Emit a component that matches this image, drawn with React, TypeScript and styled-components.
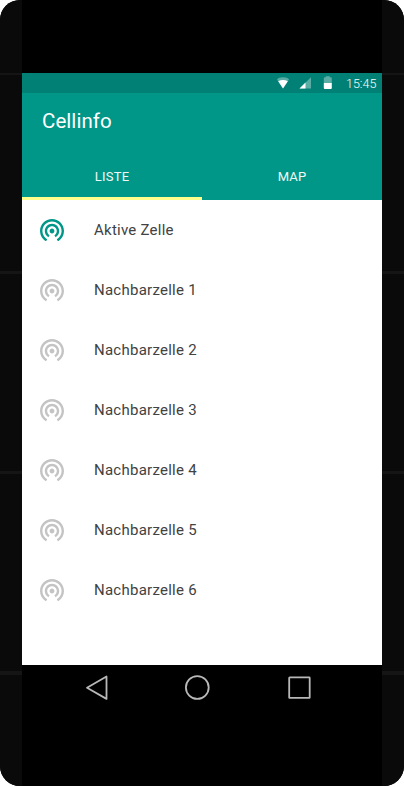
import React from "react";
import styled, { createGlobalStyle } from "styled-components";

const GlobalStyle = createGlobalStyle`
  * { box-sizing: border-box; }
  body { margin: 0; background: #fff; font-family: Roboto, sans-serif; }
`;

const Phone = styled.div`
  display: flex;
  width: 404px;
  height: 786px;
  border-radius: 20px;
  overflow: hidden;
  background: #000;
`;

const Rail = styled.div`
  display: flex;
  flex-direction: column;
  width: 22px;
  background: #0a0a0a;
`;

const RailSegment = styled.div<{ $height: number; $seam: number }>`
  height: ${(p) => p.$height}px;
  border-bottom: ${(p) => p.$seam}px solid #151515;
`;

const Device = styled.div`
  display: flex;
  flex-direction: column;
  width: 360px;
  padding-top: 73px;
`;

const StatusBar = styled.div`
  display: flex;
  align-items: center;
  justify-content: flex-end;
  height: 20px;
  padding-right: 5px;
  background: #018175;
`;

const StatusIcons = styled.svg`
  width: 56px;
  height: 20px;
  margin-right: 13px;
`;

const Clock = styled.span`
  width: 31px;
  padding-top: 2px;
  font-size: 12.5px;
  font-weight: 300;
  line-height: 18px;
  color: #fff;
  white-space: nowrap;
`;

const AppBar = styled.header`
  display: flex;
  flex-direction: column;
  height: 107px;
  background: #009788;
  color: #fff;
`;

const Title = styled.h1`
  height: 60px;
  margin: 0;
  padding-left: 20px;
  font-size: 20.5px;
  font-weight: 400;
  line-height: 56px;
  letter-spacing: 0.05px;
`;

const Tabs = styled.nav`
  display: flex;
  height: 47px;
`;

const Tab = styled.div<{ $active?: boolean }>`
  flex: 1;
  height: 47px;
  border-bottom: 3px solid ${(p) => (p.$active ? "#ffff8d" : "transparent")};
  font-size: 13px;
  line-height: 48px;
  letter-spacing: ${(p) => (p.$active ? 0.25 : 0.05)}px;
  text-align: center;
  color: #f2faf9;
`;

const List = styled.main`
  height: 465px;
  background: #fff;
`;

const Row = styled.div<{ $active?: boolean }>`
  display: flex;
  align-items: center;
  height: 60px;
  padding: 0 18px;
  gap: 30px;
  color: ${(p) => (p.$active ? "#009788" : "#c4c4c4")};
`;

const CellIcon = styled.svg`
  width: 24px;
  height: 22.4px;
  margin-top: 0.4px;
  fill: currentColor;
`;

const Label = styled.span`
  font-size: 15px;
  line-height: 20px;
  letter-spacing: 0.25px;
  color: #424242;
`;

const NavBar = styled.div`
  display: flex;
  align-items: center;
  height: 45px;
  padding-left: 63px;
`;

const NavIcon = styled.svg<{ $gap: number }>`
  width: 26px;
  height: 26px;
  margin-right: ${(p) => p.$gap}px;
  fill: none;
  stroke: #b8b8b8;
  stroke-width: 1.8;
  stroke-linejoin: round;
`;

const cells = [
  "Aktive Zelle",
  "Nachbarzelle 1",
  "Nachbarzelle 2",
  "Nachbarzelle 3",
  "Nachbarzelle 4",
  "Nachbarzelle 5",
  "Nachbarzelle 6",
];

const SideRail = () => (
  <Rail>
    <RailSegment $height={75} $seam={2} />
    <RailSegment $height={199} $seam={3} />
    <RailSegment $height={200} $seam={3} />
    <RailSegment $height={201} $seam={4} />
  </Rail>
);

const Tethering = () => (
  <CellIcon viewBox="2 3 20 18.65">
    <path d="M12 11c-1.1 0-2 .9-2 2s.9 2 2 2 2-.9 2-2-.9-2-2-2zm6 2c0-3.31-2.69-6-6-6s-6 2.69-6 6c0 2.22 1.21 4.15 3 5.19l1-1.74c-1.19-.7-2-1.97-2-3.45 0-2.21 1.79-4 4-4s4 1.79 4 4c0 1.48-.81 2.75-2 3.45l1 1.74c1.79-1.04 3-2.97 3-5.19zM12 3C6.48 3 2 7.48 2 13c0 3.7 2.01 6.92 4.99 8.65l1-1.73C5.61 18.53 4 15.96 4 13c0-4.42 3.58-8 8-8s8 3.58 8 8c0 2.96-1.61 5.53-4 6.92l1 1.73c2.99-1.73 5-4.95 5-8.65 0-5.52-4.48-10-10-10z" />
  </CellIcon>
);

export default function App() {
  return (
    <>
      <GlobalStyle />
      <Phone>
        <SideRail />
        <Device>
          <StatusBar>
            <StatusIcons viewBox="0 0 56 20">
              <path d="M6 15.500L0 6.600Q1.500 4.300 6 4.300T12 6.600Z" fill="#fff" opacity=".35" />
              <path d="M6 15.500L1.200 8.200Q6 5.700 10.800 8.200Z" fill="#fff" />
              <path d="M22.500 15.500H34V4.200Z" fill="#fff" opacity=".35" />
              <path d="M22.500 15.500H28.500V9.600Z" fill="#fff" />
              <path d="M46.800 9.900V5.200Q46.800 4.300 47.800 4.300H48.800V3.300H52.800V4.300H53.800Q54.800 4.300 54.800 5.200V9.900Z" fill="#fff" opacity=".35" />
              <path d="M46.800 9.900H54.800V15Q54.800 15.900 53.800 15.900H47.800Q46.800 15.900 46.800 15Z" fill="#fff" />
            </StatusIcons>
            <Clock>15:45</Clock>
          </StatusBar>
          <AppBar>
            <Title>Cellinfo</Title>
            <Tabs>
              <Tab $active>LISTE</Tab>
              <Tab>MAP</Tab>
            </Tabs>
          </AppBar>
          <List>
            {cells.map((name, i) => (
              <Row key={name} $active={i === 0}>
                <Tethering />
                <Label>{name}</Label>
              </Row>
            ))}
          </List>
          <NavBar>
            <NavIcon viewBox="0 0 26 26" $gap={74}>
              <path d="M2 12.700L21.500 1.500V23.900Z" />
            </NavIcon>
            <NavIcon viewBox="0 0 26 26" $gap={76}>
              <circle cx="12.300" cy="12.500" r="11.400" />
            </NavIcon>
            <NavIcon viewBox="0 0 26 26" $gap={0}>
              <rect x="2.200" y="2.400" width="20.500" height="20.500" rx=".5" />
            </NavIcon>
          </NavBar>
        </Device>
        <SideRail />
      </Phone>
    </>
  );
}
